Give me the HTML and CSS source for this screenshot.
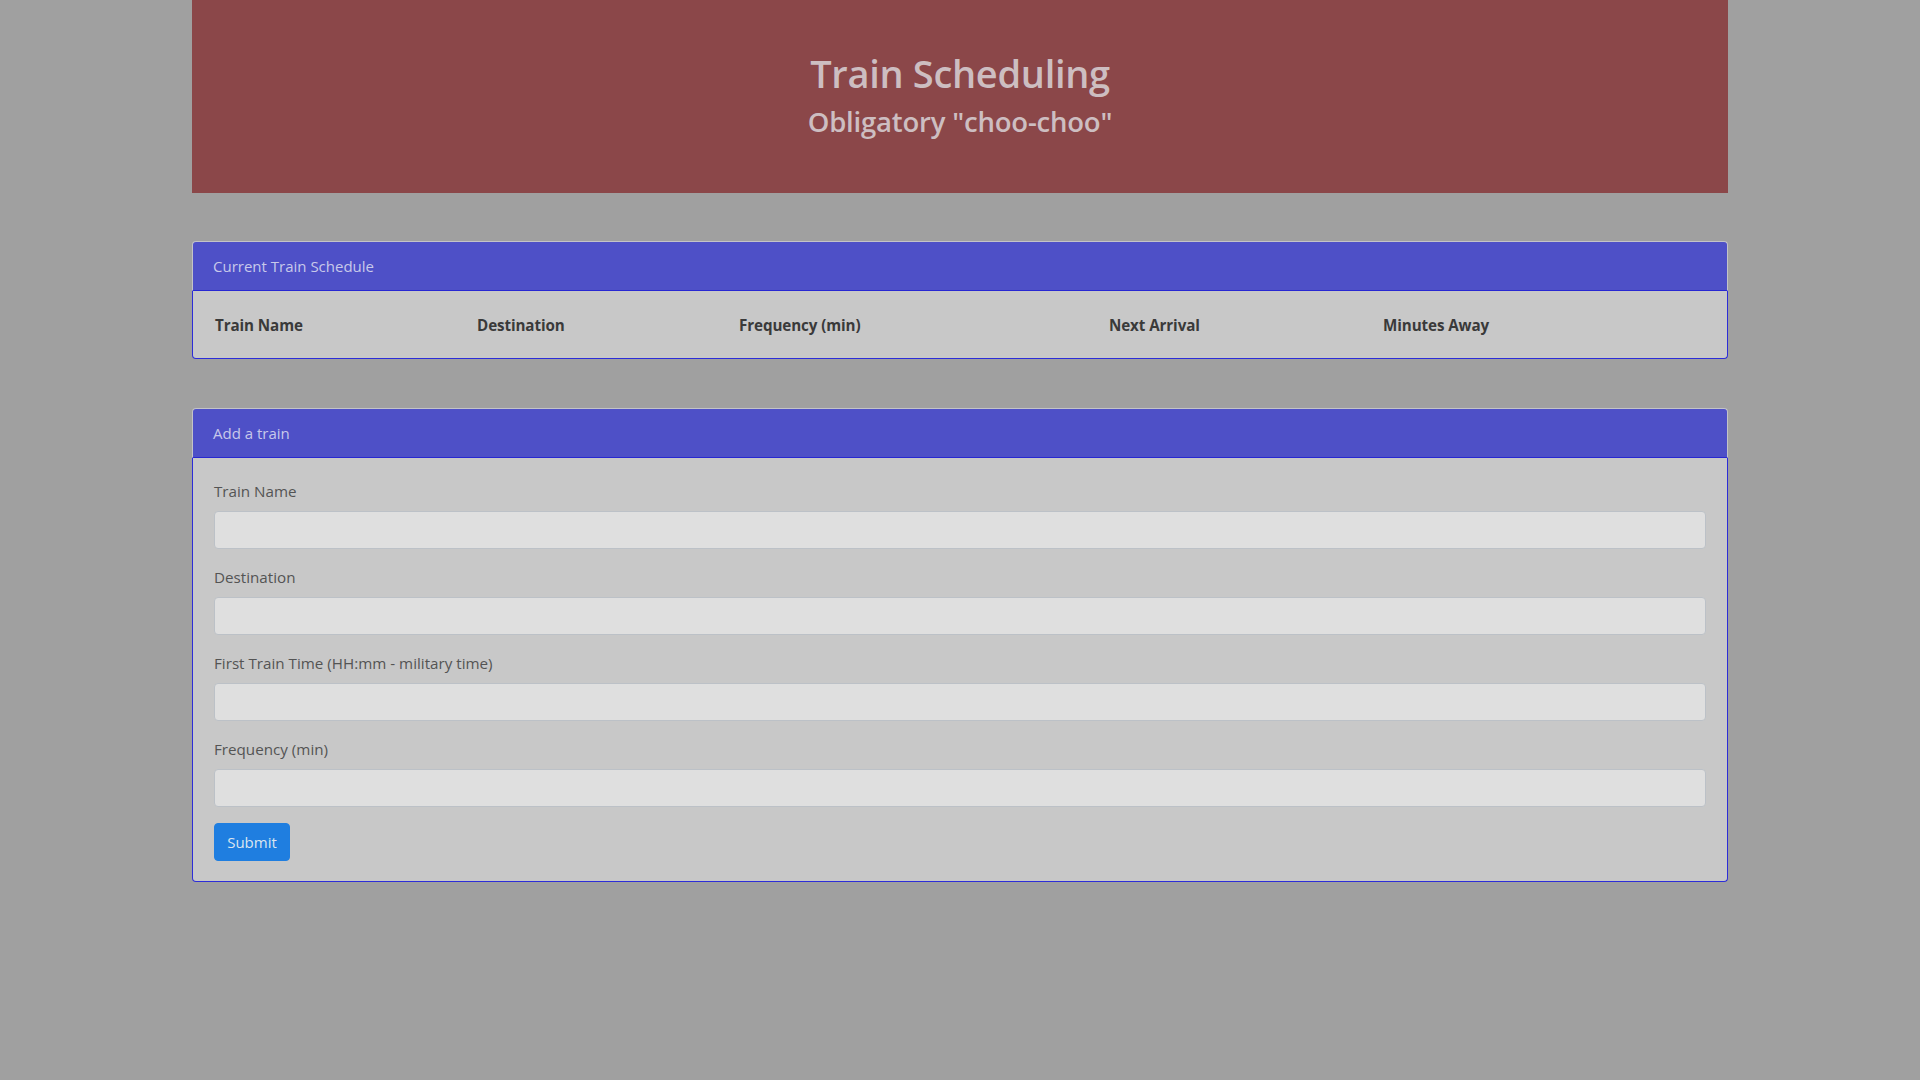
FILE: index.html
```html
<!DOCTYPE html>
<html lang="en">
<head>
<meta charset="utf-8">
<title>Train Scheduling</title>
<link rel="stylesheet" href="styles.css">
</head>
<body>
<div class="wrap">
  <header class="jumbo">
    <h1 class="title">Train Scheduling</h1>
    <h3 class="subtitle">Obligatory "choo-choo"</h3>
  </header>

  <section class="card card-schedule">
    <div class="card-header">Current Train Schedule</div>
    <div class="card-body table-body">
      <div class="thead">
        <div class="th">Train Name</div>
        <div class="th">Destination</div>
        <div class="th">Frequency (min)</div>
        <div class="th">Next Arrival</div>
        <div class="th">Minutes Away</div>
      </div>
    </div>
  </section>

  <section class="card card-add">
    <div class="card-header">Add a train</div>
    <form class="card-body form-body">
      <div class="form-group">
        <label class="label" for="name">Train Name</label>
        <input class="input" id="name" type="text">
      </div>
      <div class="form-group">
        <label class="label" for="dest">Destination</label>
        <input class="input" id="dest" type="text">
      </div>
      <div class="form-group">
        <label class="label" for="first">First Train Time (HH:mm - military time)</label>
        <input class="input" id="first" type="text">
      </div>
      <div class="form-group">
        <label class="label" for="freq">Frequency (min)</label>
        <input class="input" id="freq" type="text">
      </div>
      <button class="btn" type="button">Submit</button>
    </form>
  </section>
</div>
</body>
</html>
```

FILE: styles.css
```css
* { box-sizing: border-box; }

html, body {
  margin: 0;
  padding: 0;
}

body {
  background: #a0a0a0;
  font-family: "Open Sans", "Noto Sans", "Liberation Sans", sans-serif;
  color: #4f4f4f;
}

.wrap {
  width: 1536px;
  margin: 0 auto;
}

.jumbo {
  height: 193px;
  background: #8b4749;
  color: #cdbec1;
  text-align: center;
  padding-top: 48px;
}

.title {
  margin: 0;
  font-size: 38px;
  line-height: 50px;
  font-weight: 600;
  letter-spacing: -0.3px;
}

.subtitle {
  margin: 4px 0 0;
  font-size: 27.5px;
  line-height: 40px;
  font-weight: 600;
  letter-spacing: -0.2px;
}

.card {
  margin-top: 48px;
  border-radius: 4px;
}

.card-add {
  margin-top: 49px;
}

.card-header {
  height: 50px;
  background: #4e50c7;
  border: 1px solid #c3c3c8;
  border-bottom: 1px solid #2727d2;
  border-radius: 4px 4px 0 0;
  color: #c8c9ea;
  font-size: 15px;
  line-height: 48px;
  padding: 0 20px;
}

.card-body {
  background: #c8c8c8;
  border: 1px solid #2d2dd8;
  border-top: none;
  border-radius: 0 0 4px 4px;
}

.table-body {
  padding: 0 22px;
}

.thead {
  display: grid;
  grid-template-columns: 262px 262px 370px 274px 1fr;
  height: 67px;
  align-items: center;
}

.th {
  font-weight: 700;
  font-size: 15.2px;
  color: #3a3a3a;
  letter-spacing: -0.1px;
}

.form-body {
  padding: 21px 21px 20px;
  display: flex;
  flex-direction: column;
}

.form-group {
  display: flex;
  flex-direction: column;
  margin-bottom: 16px;
}

.label {
  font-size: 15.2px;
  line-height: 24px;
  margin-bottom: 8px;
  color: #545454;
}

.input {
  height: 38px;
  background: #dfdfdf;
  border: 1px solid #bcc1c7;
  border-radius: 4px;
  font: inherit;
  padding: 6px 12px;
}

.btn {
  align-self: flex-start;
  width: 76px;
  height: 38px;
  background: #1f7ee0;
  border: 1px solid #1f7ee0;
  border-radius: 4px;
  color: #dbe5ef;
  font-family: inherit;
  font-size: 15px;
  padding: 0;
  cursor: pointer;
}
```
